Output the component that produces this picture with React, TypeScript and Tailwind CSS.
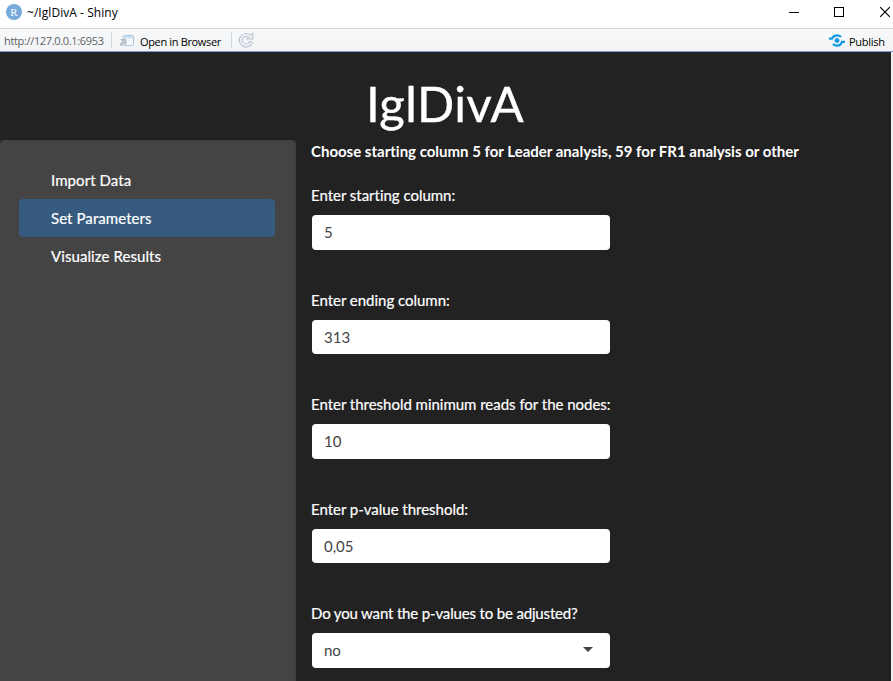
import type { ReactNode } from "react";

const fields = [
  { label: "Enter starting column:", value: "5" },
  { label: "Enter ending column:", value: "313" },
  { label: "Enter threshold minimum reads for the nodes:", value: "10" },
  { label: "Enter p-value threshold:", value: "0,05" },
];

function TitleBar() {
  return (
    <header className="flex h-7 shrink-0 items-center bg-white pl-[6px]">
      <span className="mb-[4px] flex size-4 items-center justify-center rounded-full bg-[#75aadb] font-['Liberation_Serif',serif] text-[11px] leading-none text-white">
        R
      </span>
      <span className="mb-[2px] ml-[5px] text-[12px] tracking-[0.05px] text-black">~/IglDivA - Shiny</span>
      <div className="mb-[4px] ml-auto flex items-center gap-[35px]">
        <svg width="10" height="10" viewBox="0 0 10 10" shapeRendering="crispEdges">
          <path d="M0 5.5h10" stroke="#000" />
        </svg>
        <svg width="10" height="10" viewBox="0 0 10 10" shapeRendering="crispEdges">
          <rect x=".5" y=".5" width="9" height="9" fill="none" stroke="#000" />
        </svg>
        <svg className="mr-[3px] ml-px" width="10" height="10" viewBox="0 0 10 10">
          <path d="M0 0l10 10M10 0L0 10" stroke="#000" strokeWidth="1.2" />
        </svg>
      </div>
    </header>
  );
}

function Separator() {
  return <i className="h-4 w-px bg-[#d3d7da]" />;
}

function Toolbar() {
  return (
    <div className="flex h-6 shrink-0 items-center border-t border-b border-t-[#d6dadc] border-b-[#7f9bce] bg-linear-to-b from-[#f7f9fa] to-[#f1f3f4] pl-1 text-[11px] text-black">
      <span className="mt-[2px] w-[107px] whitespace-nowrap tracking-[-0.34px] text-[#5f6367]">http://127.0.0.1:6953</span>
      <Separator />
      <svg className="mt-px ml-[7px]" width="17" height="14" viewBox="0 0 17 14" fill="none">
        <rect x="4.5" y="1.5" width="10" height="10" rx="1.5" fill="#f8fbfd" stroke="#b0c8de" />
        <path d="M5 2h9v2.5H5z" fill="#cbe0f3" />
        <path d="M2 5.5h5v5L5.4 9l-2.9 2.9-1.6-1.6 2.9-2.9z" fill="#c3cbd2" stroke="#9eabb7" strokeWidth=".7" />
      </svg>
      <span className="mt-[4px] ml-[4px] w-[91px] whitespace-nowrap tracking-[-0.35px]">Open in Browser</span>
      <Separator />
      <svg className="ml-[6px]" width="16" height="16" viewBox="0 0 16 16" fill="none">
        <path d="M11.4 4.2A5.3 5.3 0 1 0 13.2 9.6" stroke="#b5c0cb" strokeWidth="4" />
        <path d="M8.5 7H15V.8z" fill="#e9eff4" stroke="#b5c0cb" strokeLinejoin="round" />
        <path d="M12.3 4.8A5.3 5.3 0 1 0 13 10.2" stroke="#e9eff4" strokeWidth="2.2" />
      </svg>
      <div className="mr-[9px] ml-auto flex items-center">
        <svg width="16" height="14" viewBox="0 0 16 14" fill="none" stroke="#159be6" strokeWidth="2.3">
          <circle cx="8" cy="7.5" r="2.4" fill="#159be6" stroke="none" />
          <path d="M0 5.6h3C4 3.2 6 2.3 8 2.3c1.7 0 3 .6 4 1.7M16 8.9h-3C12 11.7 10 12.7 8 12.7c-1.7 0-3-.6-4-1.7" />
        </svg>
        <span className="mt-[4px] ml-[4px] w-[35px] whitespace-nowrap tracking-[-0.28px]">Publish</span>
      </div>
    </div>
  );
}

function NavItem({ children, active = false }: { children: ReactNode; active?: boolean }) {
  return (
    <li className={`flex h-[38px] items-center rounded-[4px] pl-8 tracking-[0.08px] ${active ? "bg-[#375a7f]" : ""}`}>
      {children}
    </li>
  );
}

export default function App() {
  return (
    <div className="flex h-[681px] w-[893px] flex-col overflow-hidden bg-[#222] font-['Open_Sans',sans-serif]">
      <TitleBar />
      <Toolbar />
      <main className="flex min-h-0 flex-1 flex-col border-r-2 border-[#f0f0f0] font-['Lato',sans-serif] text-[15px] leading-[21px] text-white [font-variant-ligatures:none]">
        <h1 className="h-[88px] shrink-0 pt-[24px] pr-px text-center text-[49px] leading-[54px] tracking-[0.5px] [-webkit-text-stroke:0.4px_white]">IglDivA</h1>
        <div className="flex min-h-0 flex-1">
          <aside className="w-[296px] shrink-0 rounded-t-[4px] border-t border-r border-[#3d3d3d] bg-[#444] pt-[20px] pr-[20px] pl-[19px] [-webkit-text-stroke:0.2px_white]">
            <ul>
              <NavItem>Import Data</NavItem>
              <NavItem active>Set Parameters</NavItem>
              <NavItem>Visualize Results</NavItem>
            </ul>
          </aside>
          <section className="pl-[15px]">
            <p className="h-[45px] pt-px font-bold whitespace-nowrap">
              Choose starting column 5 for Leader analysis, 59 for FR1 analysis or other
            </p>
            {fields.map((field) => (
              <div key={field.label} className="h-[104.5px]">
                <label className="block h-[30px] tracking-[-0.02px] whitespace-nowrap [-webkit-text-stroke:0.2px_white]">{field.label}</label>
                <div className="ml-px flex h-[34.5px] w-[298px] items-center rounded-[4px] bg-white pt-[0.5px] pl-3 text-[#444]">
                  {field.value}
                </div>
              </div>
            ))}
            <label className="block h-[30px] tracking-[-0.16px] [-webkit-text-stroke:0.2px_white]">Do you want the p-values to be adjusted?</label>
            <div className="ml-px flex h-[35px] w-[298px] items-center justify-between rounded-[4px] bg-white pr-[17px] pl-3 text-[#444]">
              no
              <svg className="mb-[2px]" width="10" height="5" viewBox="0 0 10 5">
                <path d="M0 0h10L5 5z" fill="#444" />
              </svg>
            </div>
          </section>
        </div>
      </main>
    </div>
  );
}
